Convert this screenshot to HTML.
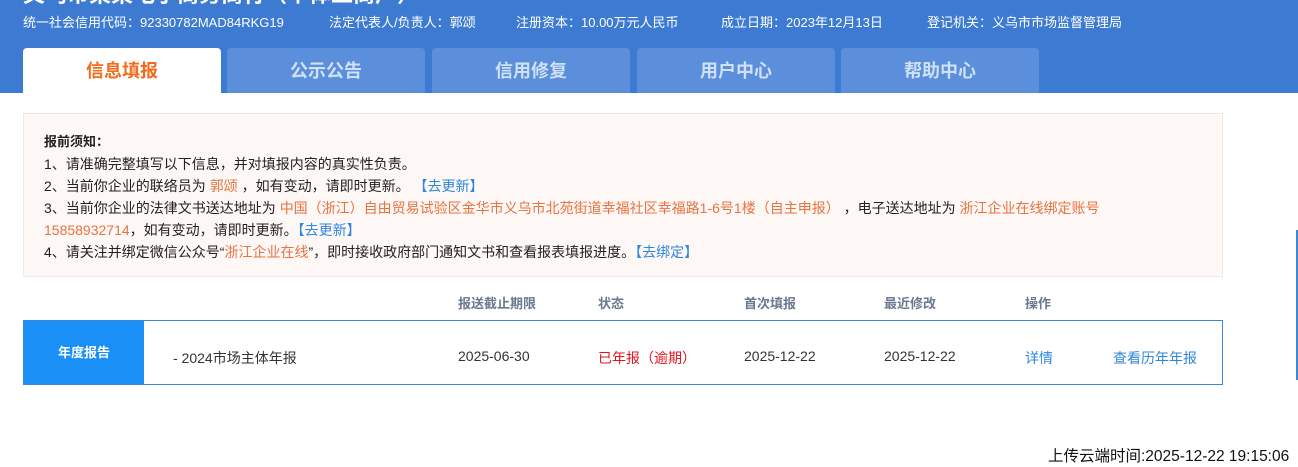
<!DOCTYPE html>
<html><head><meta charset="utf-8">
<style>
*{margin:0;padding:0;box-sizing:border-box}
body{width:1298px;height:467px;overflow:hidden;background:#fff;font-family:"Liberation Sans","Noto Sans CJK SC",sans-serif;position:relative}
.hdr{position:absolute;left:0;top:0;width:1298px;height:93px;background:#3d7bd3}
.title{position:absolute;left:23px;top:-23px;color:#fff;font-size:22px;font-weight:bold;white-space:nowrap}
.info{position:absolute;top:12px;color:#fff;font-size:13px;white-space:nowrap}
.tab{position:absolute;top:48px;width:198px;height:45px;background:#5b8fdb;border-radius:4px 4px 0 0;color:#cfe0f7;font-size:18px;font-weight:bold;text-align:center;line-height:46px}
.tab.on{background:#fff;color:#f26b1d}
.note{position:absolute;left:23px;top:113px;width:1200px;height:164px;background:#fdf7f6;border:1px solid #f1e7e5;padding:17px 0 0 20px;font-size:14px;color:#222;line-height:22px;white-space:nowrap}
.o{color:#e8733f}.b{color:#2f86dd}
.th{position:absolute;top:293px;font-size:13px;font-weight:bold;color:#6a7890}
.row{position:absolute;left:23px;top:320px;width:1200px;height:65px;border:1px solid #3b87d8}
.lab{position:absolute;left:0;top:0;width:120px;height:63px;background:#1a8ff5;color:#fff;font-weight:bold;font-size:13px;text-align:center;line-height:63px}
.c{position:absolute;top:27px;font-size:14px;color:#333;white-space:nowrap}
.c.b{color:#2f86dd}
</style></head><body>
<div class="hdr">
<div class="title">义乌市某某电子商务商行（个体工商户）</div>
<div class="info" style="left:23px">统一社会信用代码：92330782MAD84RKG19</div>
<div class="info" style="left:329px">法定代表人/负责人：郭颂</div>
<div class="info" style="left:516px">注册资本：10.00万元人民币</div>
<div class="info" style="left:721px">成立日期：2023年12月13日</div>
<div class="info" style="left:927px">登记机关：义乌市市场监督管理局</div>
<div class="tab on" style="left:23px">信息填报</div>
<div class="tab" style="left:227px">公示公告</div>
<div class="tab" style="left:432px">信用修复</div>
<div class="tab" style="left:637px">用户中心</div>
<div class="tab" style="left:841px">帮助中心</div>
</div>
<div class="note">
<div style="font-weight:bold;font-size:13px">报前须知：</div>
<div>1、请准确完整填写以下信息，并对填报内容的真实性负责。</div>
<div>2、当前你企业的联络员为 <span class="o">郭颂</span> ，如有变动，请即时更新。 <span class="b">【去更新】</span></div>
<div>3、当前你企业的法律文书送达地址为 <span class="o">中国（浙江）自由贸易试验区金华市义乌市北苑街道幸福社区幸福路1-6号1楼（自主申报）</span> ，电子送达地址为 <span class="o">浙江企业在线绑定账号</span></div>
<div><span class="o">15858932714</span>，如有变动，请即时更新。<span class="b">【去更新】</span></div>
<div>4、请关注并绑定微信公众号“<span class="o">浙江企业在线</span>”，即时接收政府部门通知文书和查看报表填报进度。<span class="b">【去绑定】</span></div>
</div>
<div class="th" style="left:458px">报送截止期限</div>
<div class="th" style="left:598px">状态</div>
<div class="th" style="left:744px">首次填报</div>
<div class="th" style="left:884px">最近修改</div>
<div class="th" style="left:1025px">操作</div>
<div class="row">
<div class="lab">年度报告</div>
<div class="c" style="left:149px">- 2024市场主体年报</div>
<div class="c" style="left:434px">2025-06-30</div>
<div class="c" style="left:574px;color:#e0141e">已年报（逾期）</div>
<div class="c" style="left:720px">2025-12-22</div>
<div class="c" style="left:860px">2025-12-22</div>
<div class="c b" style="left:1001px">详情</div>
<div class="c b" style="left:1089px">查看历年年报</div>
</div>
<div style="position:absolute;left:1296px;top:230px;width:2px;height:150px;background:#3b87d8"></div>
<div style="position:absolute;left:1048px;top:444px;font-size:15.5px;color:#111;white-space:nowrap">上传云端时间:2025-12-22 19:15:06</div>
</body></html>
